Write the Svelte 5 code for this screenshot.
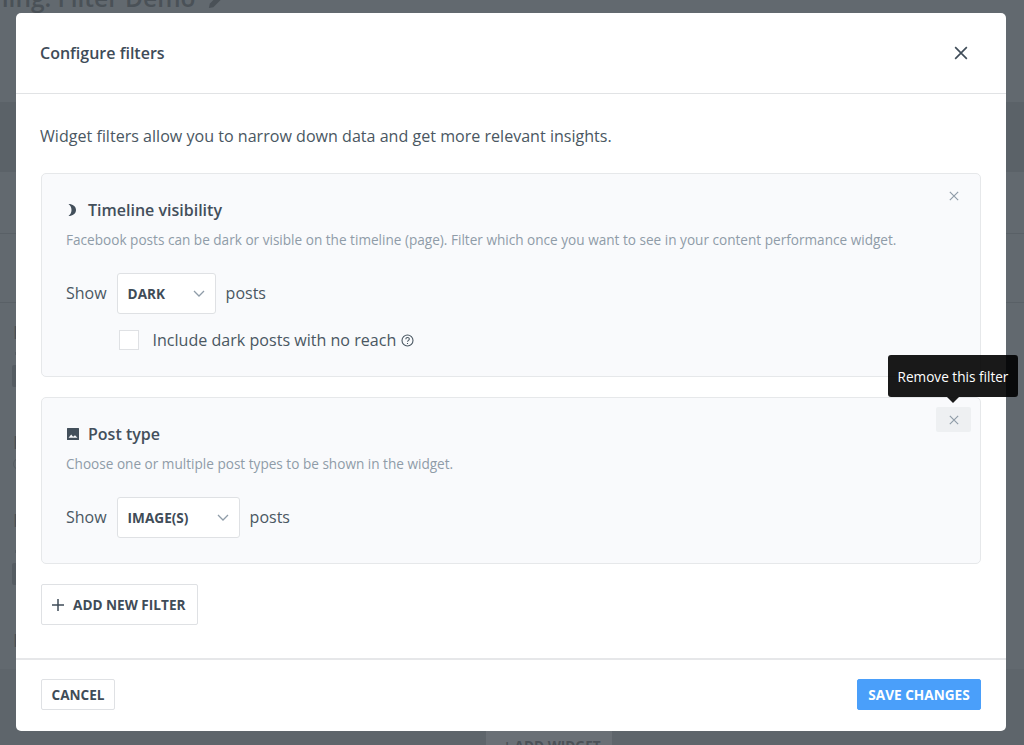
<script lang="ts">
	const timelineNote =
		'Facebook posts can be dark or visible on the timeline (page). Filter which once you want to see in your content performance widget.';
	const typeNote = 'Choose one or multiple post types to be shown in the widget.';
</script>

{#snippet cross(size: number)}
	<svg width={size} height={size} viewBox="0 0 12 12" fill="none" stroke="currentColor" stroke-width="1.400">
		<path d="M1 1l10 10M11 1L1 11" />
	</svg>
{/snippet}

{#snippet chevron()}
	<svg class="chevron" width="12" height="7" viewBox="0 0 12 7" fill="none" stroke="currentColor" stroke-width="1.300">
		<path d="M1 1l5 5 5-5" />
	</svg>
{/snippet}

<div class="page">
	<div class="page-title">
		<span>ning: Filter Demo</span>
		<svg width="16" height="16" viewBox="0 0 18 18" fill="currentColor"><path d="M1 17l1-5L12 2l4 4L6 16z" /></svg>
	</div>
	<div class="band band-a"></div>
	<div class="band band-b"></div>
	<div class="band band-c">
		<span class="frag f1">Filter</span>
		<span class="dot d1"></span>
		<span class="block b1"></span>
		<span class="frag f2">Filter</span>
		<span class="ring"></span>
		<span class="frag f3">Filter</span>
		<span class="dot d2"></span>
		<span class="block b2"></span>
		<span class="frag f4">Layout</span>
	</div>
	<div class="band band-d">
		<div class="page-add">+ ADD WIDGET</div>
	</div>
</div>

<div class="modal">
	<header class="modal-head">
		<h2>Configure filters</h2>
		<button class="close">{@render cross(14)}</button>
	</header>

	<section class="modal-body">
		<p class="intro">Widget filters allow you to narrow down data and get more relevant insights.</p>

		<div class="card card-timeline">
			<button class="remove">{@render cross(10)}</button>
			<h3>
				<svg class="icon" width="14" height="14" viewBox="0 0 14 14" fill="currentColor">
					<path d="M2.500 1c4.300 0 7.500 2.500 7.500 6s-3.200 6-7.500 6c1.900-1.300 3-3.500 3-6s-1.100-4.700-3-6z" />
				</svg>
				Timeline visibility
			</h3>
			<p class="note">{timelineNote}</p>
			<div class="show-row">
				<span>Show</span>
				<div class="select select-dark">DARK {@render chevron()}</div>
				<span>posts</span>
			</div>
			<label class="check-row">
				<span class="checkbox"></span>
				<span>Include dark posts with no reach</span>
				<svg width="13" height="13" viewBox="0 0 13 13" fill="none" stroke="currentColor" stroke-width="1.100">
					<circle cx="6.500" cy="6.500" r="5.500" />
					<path d="M4.800 5.200c0-2.200 3.500-2.200 3.500-.1 0 1.300-1.800 1.300-1.800 2.700M6.500 9v1" />
				</svg>
			</label>
		</div>

		<div class="card card-type">
			<div class="tooltip">Remove this filter</div>
			<button class="remove active">{@render cross(10)}</button>
			<h3>
				<svg class="icon" width="14" height="14" viewBox="0 0 14 14">
					<path fill="currentColor" d="M1.500 1h11a.5.5 0 0 1 .5.5v11a.5.5 0 0 1-.5.5h-11a.5.5 0 0 1-.5-.5v-11a.5.5 0 0 1 .5-.5z" />
					<path fill="#f8f9fb" d="M2.500 10.800l2.700-3.300 1.900 2.200 1.900-1.400 2.500 2.500z" />
				</svg>
				Post type
			</h3>
			<p class="note">{typeNote}</p>
			<div class="show-row">
				<span>Show</span>
				<div class="select select-type">IMAGE(S) {@render chevron()}</div>
				<span>posts</span>
			</div>
		</div>

		<button class="btn btn-add">
			<svg width="14" height="14" viewBox="0 0 14 14" fill="none" stroke="currentColor" stroke-width="1.500">
				<path d="M7 1v12M1 7h12" />
			</svg>
			ADD NEW FILTER
		</button>
	</section>

	<footer class="modal-foot">
		<button class="btn btn-cancel">CANCEL</button>
		<button class="btn btn-save">SAVE CHANGES</button>
	</footer>
</div>

<style>
	:global(body) {
		margin: 0;
		background: #62696f;
		font-family: 'Open Sans', 'Liberation Sans', sans-serif;
		color: #3f4c58;
		overflow: hidden;
	}

	.page {
		height: 745px;
		display: flex;
		flex-direction: column;
		background: #62696f;
		color: #4a5157;
		overflow: hidden;
	}

	.page-title {
		display: flex;
		align-items: flex-start;
		gap: 13px;
		height: 106px;
		margin-left: -7px;
		margin-top: -14px;
		flex: none;
		font-size: 24.500px;
		font-weight: 600;
		line-height: 24px;
		white-space: nowrap;
		color: #4a5157;
	}

	.page-title svg {
		margin-top: 7px;
	}

	.band {
		flex: none;
		box-sizing: border-box;
	}

	.band-a {
		margin-top: 10px;
		height: 70px;
		background: #5b6268;
	}

	.band-b {
		height: 131px;
		border-bottom: 1px solid #596066;
		background: linear-gradient(#62696f 61px, #596066 61px, #596066 62px, #62696f 62px);
	}

	.band-c {
		height: 366px;
		display: flex;
		flex-direction: column;
		align-items: flex-start;
		padding-left: 12px;
		color: #484f55;
		overflow: hidden;
	}

	.frag {
		height: 18px;
		font-size: 18px;
		line-height: 18px;
		margin-left: 1px;
	}

	.f1 {
		margin-top: 20px;
	}

	.f2 {
		margin-top: 46px;
	}

	.f3 {
		margin-top: 41px;
	}

	.f4 {
		margin-top: 46px;
	}

	.dot {
		width: 4px;
		height: 3px;
		margin: 11px 0 0 3px;
		background: #565d63;
	}

	.d2 {
		margin-top: 21px;
	}

	.block {
		width: 8px;
		height: 22px;
		margin-top: 10px;
		background: #555c62;
		border-radius: 2px;
	}

	.ring {
		width: 12px;
		height: 12px;
		margin: 7px 0 0 1px;
		box-sizing: border-box;
		border: 1px solid #555c62;
		border-radius: 50%;
	}

	.band-d {
		flex: 1;
		background: #5e656b;
		display: flex;
		align-items: flex-end;
		padding: 0 412px 0 486px;
	}

	.page-add {
		flex: 1;
		height: 14px;
		padding-left: 6px;
		background: #6a7076;
		text-align: center;
		font-size: 13.600px;
		font-weight: 700;
		line-height: 30px;
		color: #4a5157;
		overflow: hidden;
	}

	.modal {
		position: absolute;
		left: 16px;
		top: 13px;
		width: 990px;
		height: 718px;
		display: flex;
		flex-direction: column;
		box-sizing: border-box;
		background: #fff;
		border-radius: 5px;
	}

	.modal-head {
		flex: none;
		height: 81px;
		box-sizing: border-box;
		padding: 0 38px 0 24px;
		display: flex;
		align-items: center;
		justify-content: space-between;
		border-bottom: 1px solid #e1e3e5;
	}

	h2 {
		margin: 0;
		font-size: 16px;
		font-weight: 600;
	}

	button {
		font-family: inherit;
		cursor: pointer;
	}

	.close {
		display: flex;
		padding: 0;
		border: 0;
		background: none;
		color: #3f4c58;
	}

	.modal-body {
		flex: 1;
		padding: 0 25px;
		display: flex;
		flex-direction: column;
		align-items: flex-start;
	}

	.intro {
		margin: 31px 0 26px -1px;
		font-size: 16.080px;
		line-height: 22px;
		color: #4a5762;
	}

	.card {
		position: relative;
		align-self: stretch;
		box-sizing: border-box;
		padding: 25px 24px 0;
		background: #f9fafc;
		border: 1px solid #e6e8ea;
		border-radius: 5px;
	}

	.card-timeline {
		height: 204px;
	}

	.card-type {
		height: 167px;
		margin-top: 20px;
	}

	h3 {
		margin: 0;
		display: flex;
		align-items: center;
		font-size: 16px;
		line-height: 22px;
		font-weight: 600;
		color: #434f5b;
	}

	.icon {
		width: 14px;
		margin-right: 8px;
	}

	.note {
		margin: 10px 0 0;
		font-size: 13.600px;
		line-height: 18px;
		color: #8f9ca8;
	}

	.show-row {
		margin-top: 24px;
		display: flex;
		align-items: center;
		gap: 10px;
		font-size: 16px;
		line-height: 20px;
		color: #4a5762;
	}

	.show-row > span {
		margin-top: -1px;
	}

	.select {
		height: 41px;
		box-sizing: border-box;
		padding: 0 10px;
		display: flex;
		align-items: center;
		justify-content: space-between;
		background: #fff;
		border: 1px solid #dfe1e4;
		border-radius: 3px;
		font-size: 13.600px;
		font-weight: 700;
		color: #3f4c58;
	}

	.select-dark {
		width: 99px;
	}

	.select-type {
		width: 123px;
	}

	.chevron {
		color: #8f9ca8;
	}

	.check-row {
		margin: 15px 0 0 52.500px;
		display: flex;
		align-items: center;
		font-size: 16.080px;
		color: #4a5762;
	}

	.check-row svg {
		margin-left: 5px;
	}

	.checkbox {
		width: 20px;
		height: 20px;
		box-sizing: border-box;
		margin-right: 14px;
		background: #fff;
		border: 1px solid #dfe1e4;
	}

	.remove {
		position: absolute;
		top: 9px;
		right: 9px;
		width: 35px;
		height: 25px;
		display: flex;
		align-items: center;
		justify-content: center;
		padding: 0;
		border: 0;
		border-radius: 2px;
		background: none;
		color: #8f9ca8;
	}

	.remove.active {
		background: #eef0f2;
	}

	.tooltip {
		position: absolute;
		top: -43px;
		right: -38px;
		width: 130px;
		height: 42px;
		display: flex;
		align-items: center;
		justify-content: center;
		background: rgba(0, 0, 0, 0.9);
		border-radius: 3px;
		font-size: 13.600px;
		color: #fff;
		white-space: nowrap;
		z-index: 1;
	}

	.tooltip::after {
		content: '';
		position: absolute;
		left: 50%;
		bottom: -6px;
		margin-left: -6px;
		border: solid transparent;
		border-width: 6px 6px 0;
		border-top-color: rgba(0, 0, 0, 0.9);
	}

	.btn {
		display: flex;
		align-items: center;
		justify-content: center;
		box-sizing: border-box;
		background: #fff;
		border: 1px solid #dfe1e4;
		border-radius: 2px;
		font-size: 13.600px;
		font-weight: 700;
		color: #3f4c58;
	}

	.btn-add {
		margin-top: 20px;
		width: 157px;
		height: 41px;
		padding: 0 9px;
		gap: 8px;
		justify-content: flex-start;
	}

	.modal-foot {
		flex: none;
		height: 73px;
		box-sizing: border-box;
		padding: 19px 25px 0 25px;
		display: flex;
		justify-content: space-between;
		align-items: flex-start;
		border-top: 2px solid #e6e7e9;
	}

	.btn-cancel {
		width: 74px;
		height: 31px;
		padding: 0;
	}

	.btn-save {
		width: 124px;
		height: 31px;
		padding: 0;
		background: #4a9ffa;
		border-color: #4a9ffa;
		color: #fff;
	}
</style>
